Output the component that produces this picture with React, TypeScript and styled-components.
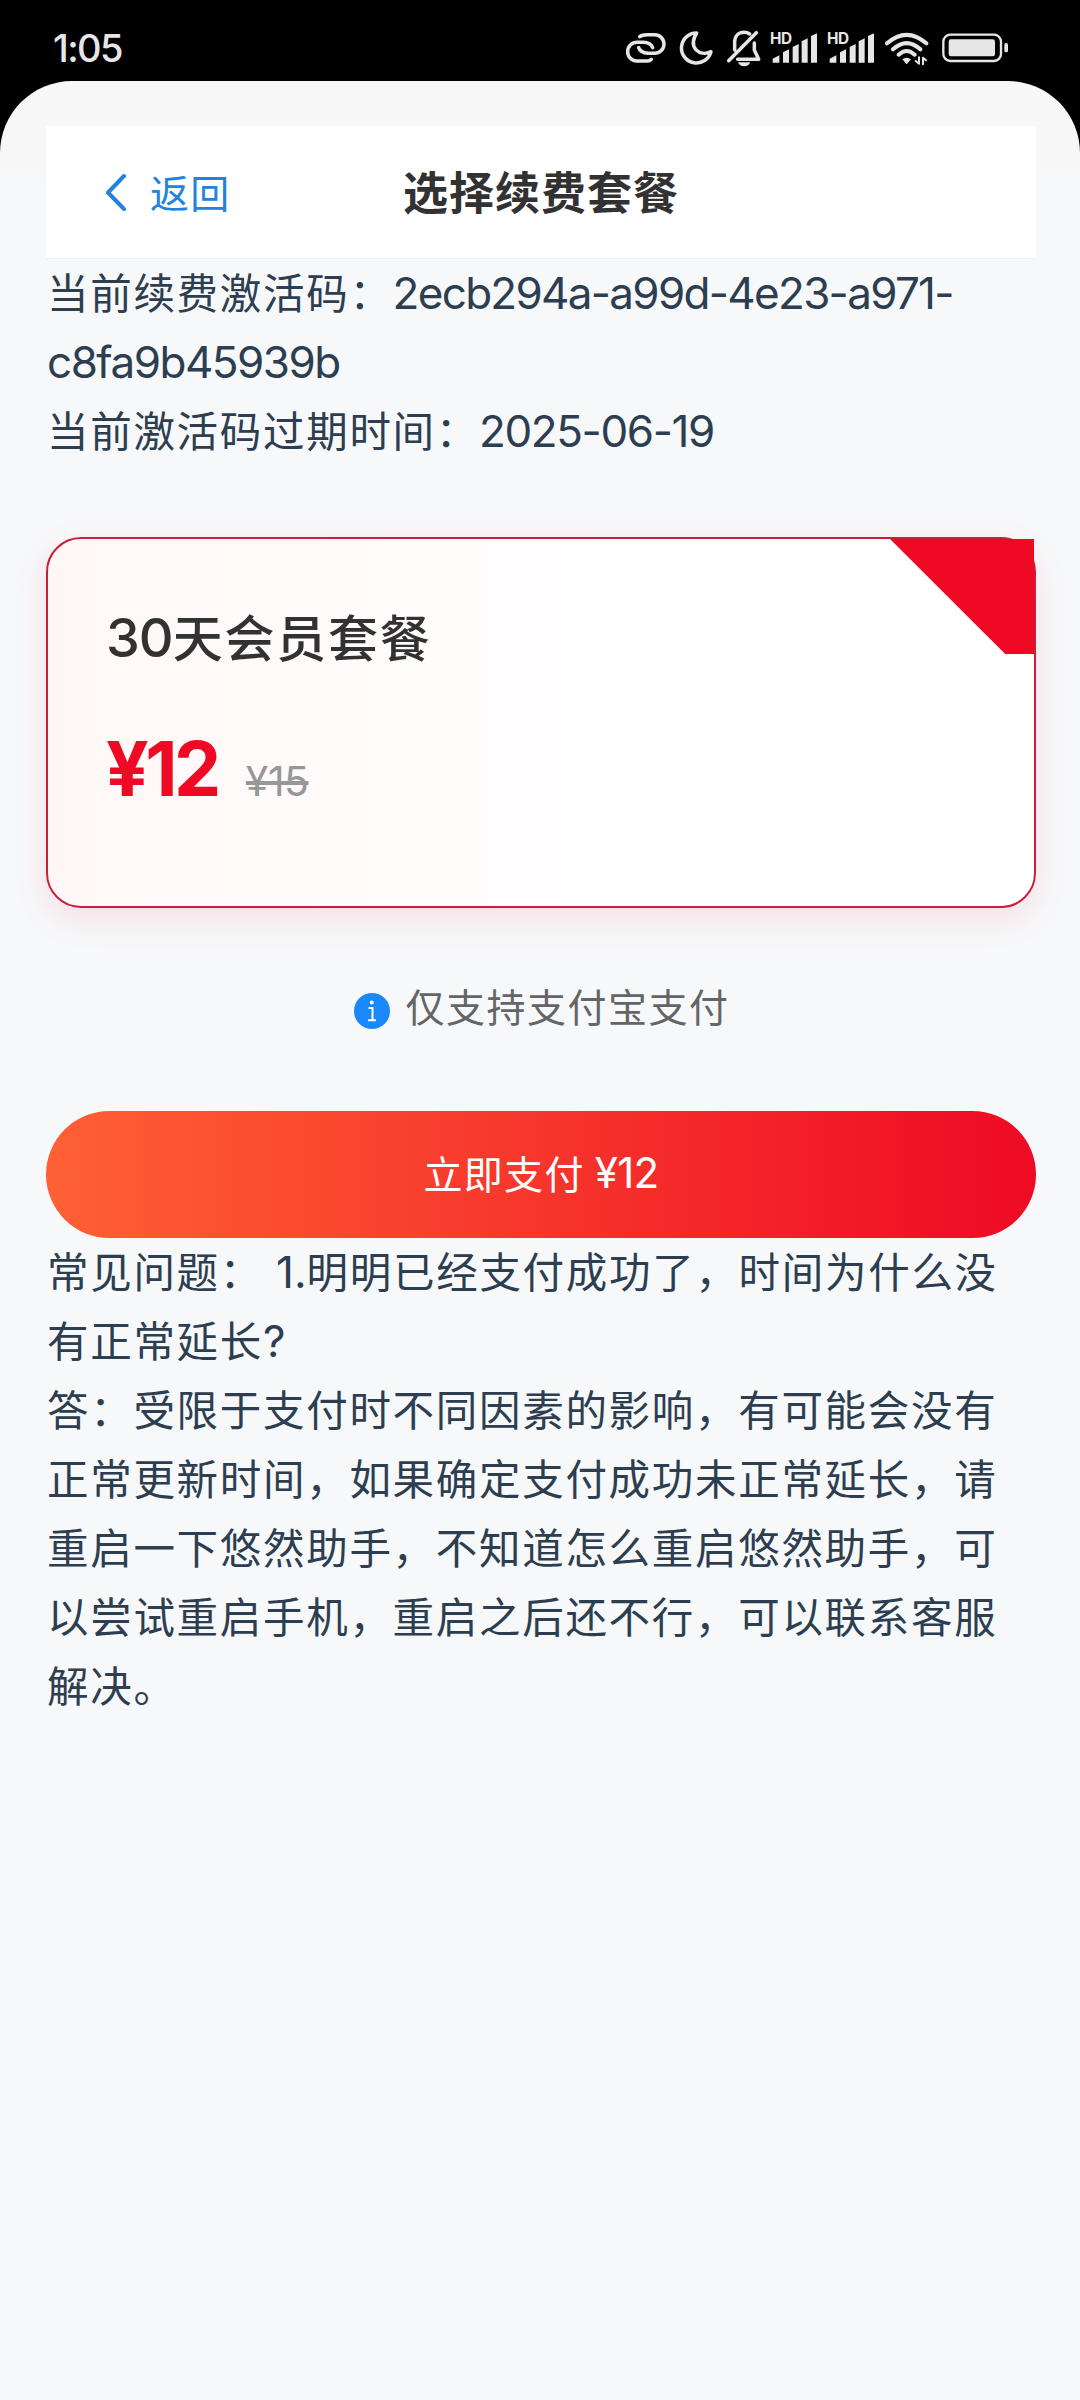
import React from "react";
import styled, { createGlobalStyle } from "styled-components";

const GlobalStyle = createGlobalStyle`
  * { box-sizing: border-box; }
  body {
    margin: 0;
    background: #000;
    font-family: "Noto Sans CJK SC", sans-serif;
  }
`;

const Screen = styled.div`
  display: flex;
  flex-direction: column;
  width: 1080px;
  height: 2400px;
  background: #000;
  overflow: hidden;
`;

const StatusBar = styled.header`
  display: flex;
  flex: none;
  justify-content: space-between;
  height: 81px;
  padding: 27px 70px 0 53px;
  color: #e6e6e6;
`;

const Clock = styled.span`
  font: 500 38px/43px Inter, sans-serif;
  letter-spacing: -1.6px;
`;

const StatusIcons = styled.div`
  display: flex;
  height: 40px;
`;

const Glyph = styled.svg<{ $w: number }>`
  display: block;
  width: ${(p) => p.$w}px;
  height: 40px;
  fill: none;
  stroke: #e6e6e6;
  stroke-width: 10.5;
  stroke-linecap: round;
  stroke-linejoin: round;

  .solid {
    fill: #e6e6e6;
    stroke: none;
  }
  text {
    font: 700 46px Inter, sans-serif;
    letter-spacing: -1px;
  }
`;

const Sheet = styled.main`
  flex: 1;
  padding: 45px 44px 0 46px;
  border-radius: 72px 72px 0 0;
  background: linear-gradient(#f7f7f7 0, #f7f7f7 60px, #f7f8fa 120px);
`;

const NavBar = styled.nav`
  display: grid;
  grid-template-columns: 1fr auto 1fr;
  align-items: center;
  height: 133px;
  padding: 0 58px 3px;
  background: #fff;
  border-bottom: 1px solid #eef0f3;
`;

const BackLink = styled.a`
  display: flex;
  align-items: center;
  gap: 22px;
  color: #2383dc;
  font-size: 39px;
  line-height: 60px;
  letter-spacing: 1.3px;
`;

const Chevron = styled.svg`
  width: 24px;
  height: 38px;
  margin-top: 2px;
  fill: none;
  stroke: #2383dc;
  stroke-width: 4;
  stroke-linecap: round;
  stroke-linejoin: round;
`;

const NavTitle = styled.h1`
  margin: 0;
  color: #323233;
  font-size: 45px;
  font-weight: 700;
  line-height: 66px;
  letter-spacing: 1px;
`;

const Lines = styled.section`
  padding-left: 1px;
  color: #2c3e50;
  font-size: 41.5px;
  line-height: 65px;
  letter-spacing: 1.7px;
  word-spacing: 2px;
  white-space: nowrap;
`;

const Line = styled.div`
  height: 69px;
`;

const Latin = styled.span<{ $ls?: number }>`
  font-family: Inter, sans-serif;
  font-size: 44px;
  line-height: 1;
  letter-spacing: ${(p) => p.$ls ?? -1.7}px;
`;

const PlanCard = styled.article`
  position: relative;
  height: 371px;
  margin-top: 71px;
  padding: 58px 58px 0;
  border: 2px solid #c8203a;
  border-radius: 35px;
  background: linear-gradient(90deg, #fff8f7, #fff 65%);
  box-shadow: 0 11px 34px rgba(238, 10, 36, 0.1);
`;

const Ribbon = styled.div`
  position: absolute;
  top: 0;
  right: 0;
  width: 144px;
  height: 115px;
  background: #ee0a24;
  clip-path: polygon(0 0, 100% 0, 100% 100%, 80% 100%);
`;

const PlanName = styled.h2`
  margin: 0;
  color: #323233;
  font-size: 50px;
  font-weight: 500;
  line-height: 76px;
  letter-spacing: 1.75px;

  span {
    font: 500 54px/1 Inter, sans-serif;
    letter-spacing: -1px;
  }
`;

const PriceRow = styled.div`
  display: flex;
  align-items: baseline;
  gap: 28px;
  margin-top: 51px;
  font-family: Inter, sans-serif;
  line-height: 90px;
`;

const Price = styled.strong`
  color: #ee0a24;
  font-size: 75px;
  font-weight: 700;
  letter-spacing: -3.5px;
`;

const OldPrice = styled.del`
  color: #969799;
  font-size: 41px;
  letter-spacing: -0.5px;
  text-decoration-thickness: 4px;
`;

const Notice = styled.p`
  display: flex;
  align-items: center;
  justify-content: center;
  gap: 15px;
  margin: 66px 0 0;
  padding-left: 2px;
  color: #646566;
  font-size: 39px;
  line-height: 62px;
  letter-spacing: 1.5px;
`;

const InfoIcon = styled.svg`
  width: 36px;
  height: 36px;
  margin-top: 11px;
`;

const PayButton = styled.button`
  display: flex;
  align-items: center;
  justify-content: center;
  width: 100%;
  height: 127px;
  margin: 75px 0 0;
  padding: 0 0 6px;
  border: 0;
  border-radius: 64px;
  background: linear-gradient(90deg, #ff6034, #ee0a24);
  color: #fff;
  font: 400 39px/60px "Noto Sans CJK SC", sans-serif;
  letter-spacing: 1.3px;
  white-space: pre;

  span {
    margin-top: 3px;
    font: 400 42px/1 Inter, sans-serif;
    letter-spacing: -0.7px;
  }
`;

const Signal = () => (
  <Glyph $w={56.33} viewBox="507 50 169 120">
    <text className="solid" x="510" y="102">HD</text>
    <path
      className="solid"
      d="M518 157V145L538 135V157ZM549 157V126L567 117V157ZM578 157V110L596 101V157ZM605 157V93L623 84V157ZM633 157V77L651 69V157Z"
    />
  </Glyph>
);

export default function App() {
  return (
    <>
      <GlobalStyle />
      <Screen>
        <StatusBar>
          <Clock>1:05</Clock>
          <StatusIcons>
            <Glyph $w={50} viewBox="70 50 150 120">
              <path d="M152 147Q148 152 140 152H109A28 28 0 0 1 109 96H128Q150 97 156 112" />
              <path d="M117 79Q124 73 140 73H162A28 28 0 0 1 162 129H142Q119 127 114 112" />
            </Glyph>
            <Glyph $w={50} viewBox="220 50 150 120">
              <path d="M288 68A45 45 0 1 0 331 124C296 140 261 112 288 68Z" />
            </Glyph>
            <Glyph $w={45.67} viewBox="370 50 137 120">
              <path d="M384 151L467 67M402 119V96C402 76 415 66 430 66Q440 66 447 71M461 98V119L474 147H411" />
              <path className="solid" d="M412 156H449Q444 168 430 168Q417 168 412 156Z" />
            </Glyph>
            <Signal />
            <Signal />
            <Glyph $w={58} viewBox="186 50 174 120">
              <path d="M201 99Q260 48 319 99M219 117Q260 80 301 117M236 133Q260 111 284 133" strokeWidth="12" />
              <path className="solid" d="M247 147Q260 137 273 147L260 162Z" />
              <path d="M297 141V160L287 152M309 162V142L318 150" strokeWidth="6" />
            </Glyph>
            <Glyph $w={70} viewBox="360 50 210 120">
              <rect x="370" y="73" width="173" height="79" rx="21" strokeWidth="7" />
              <rect className="solid" x="386" y="87" width="139" height="51" rx="7" />
              <rect className="solid" x="553" y="98" width="11" height="28" rx="5" />
            </Glyph>
          </StatusIcons>
        </StatusBar>

        <Sheet>
          <NavBar>
            <BackLink>
              <Chevron viewBox="0 0 24 38">
                <path d="M20 3L4 19.500L20 36" />
              </Chevron>
              返回
            </BackLink>
            <NavTitle>选择续费套餐</NavTitle>
          </NavBar>

          <Lines>
            <Line>
              当前续费激活码：<Latin>2ecb294a-a99d-4e23-a971-</Latin>
            </Line>
            <Line>
              <Latin $ls={-1.5}>c8fa9b45939b</Latin>
            </Line>
            <Line>
              当前激活码过期时间：<Latin $ls={-1.4}>2025-06-19</Latin>
            </Line>
          </Lines>

          <PlanCard>
            <Ribbon />
            <PlanName>
              <span>30</span>天会员套餐
            </PlanName>
            <PriceRow>
              <Price>¥12</Price>
              <OldPrice>¥15</OldPrice>
            </PriceRow>
          </PlanCard>

          <Notice>
            <InfoIcon viewBox="0 0 36 36">
              <circle cx="18" cy="18" r="18" fill="#1989fa" />
              <circle cx="17.700" cy="9.500" r="2" fill="#fff" />
              <path d="M14.500 15H18.500V27M14 27.200H22" fill="none" stroke="#fff" strokeWidth="2" />
            </InfoIcon>
            仅支持支付宝支付
          </Notice>

          <PayButton>
            立即支付 <span>¥12</span>
          </PayButton>

          <Lines>
            <Line>
              常见问题： <Latin $ls={0}>1.</Latin>明明已经支付成功了，时间为什么没
            </Line>
            <Line>
              有正常延长<Latin>?</Latin>
            </Line>
            <Line>答：受限于支付时不同因素的影响，有可能会没有</Line>
            <Line>正常更新时间，如果确定支付成功未正常延长，请</Line>
            <Line>重启一下悠然助手，不知道怎么重启悠然助手，可</Line>
            <Line>以尝试重启手机，重启之后还不行，可以联系客服</Line>
            <Line>解决。</Line>
          </Lines>
        </Sheet>
      </Screen>
    </>
  );
}
